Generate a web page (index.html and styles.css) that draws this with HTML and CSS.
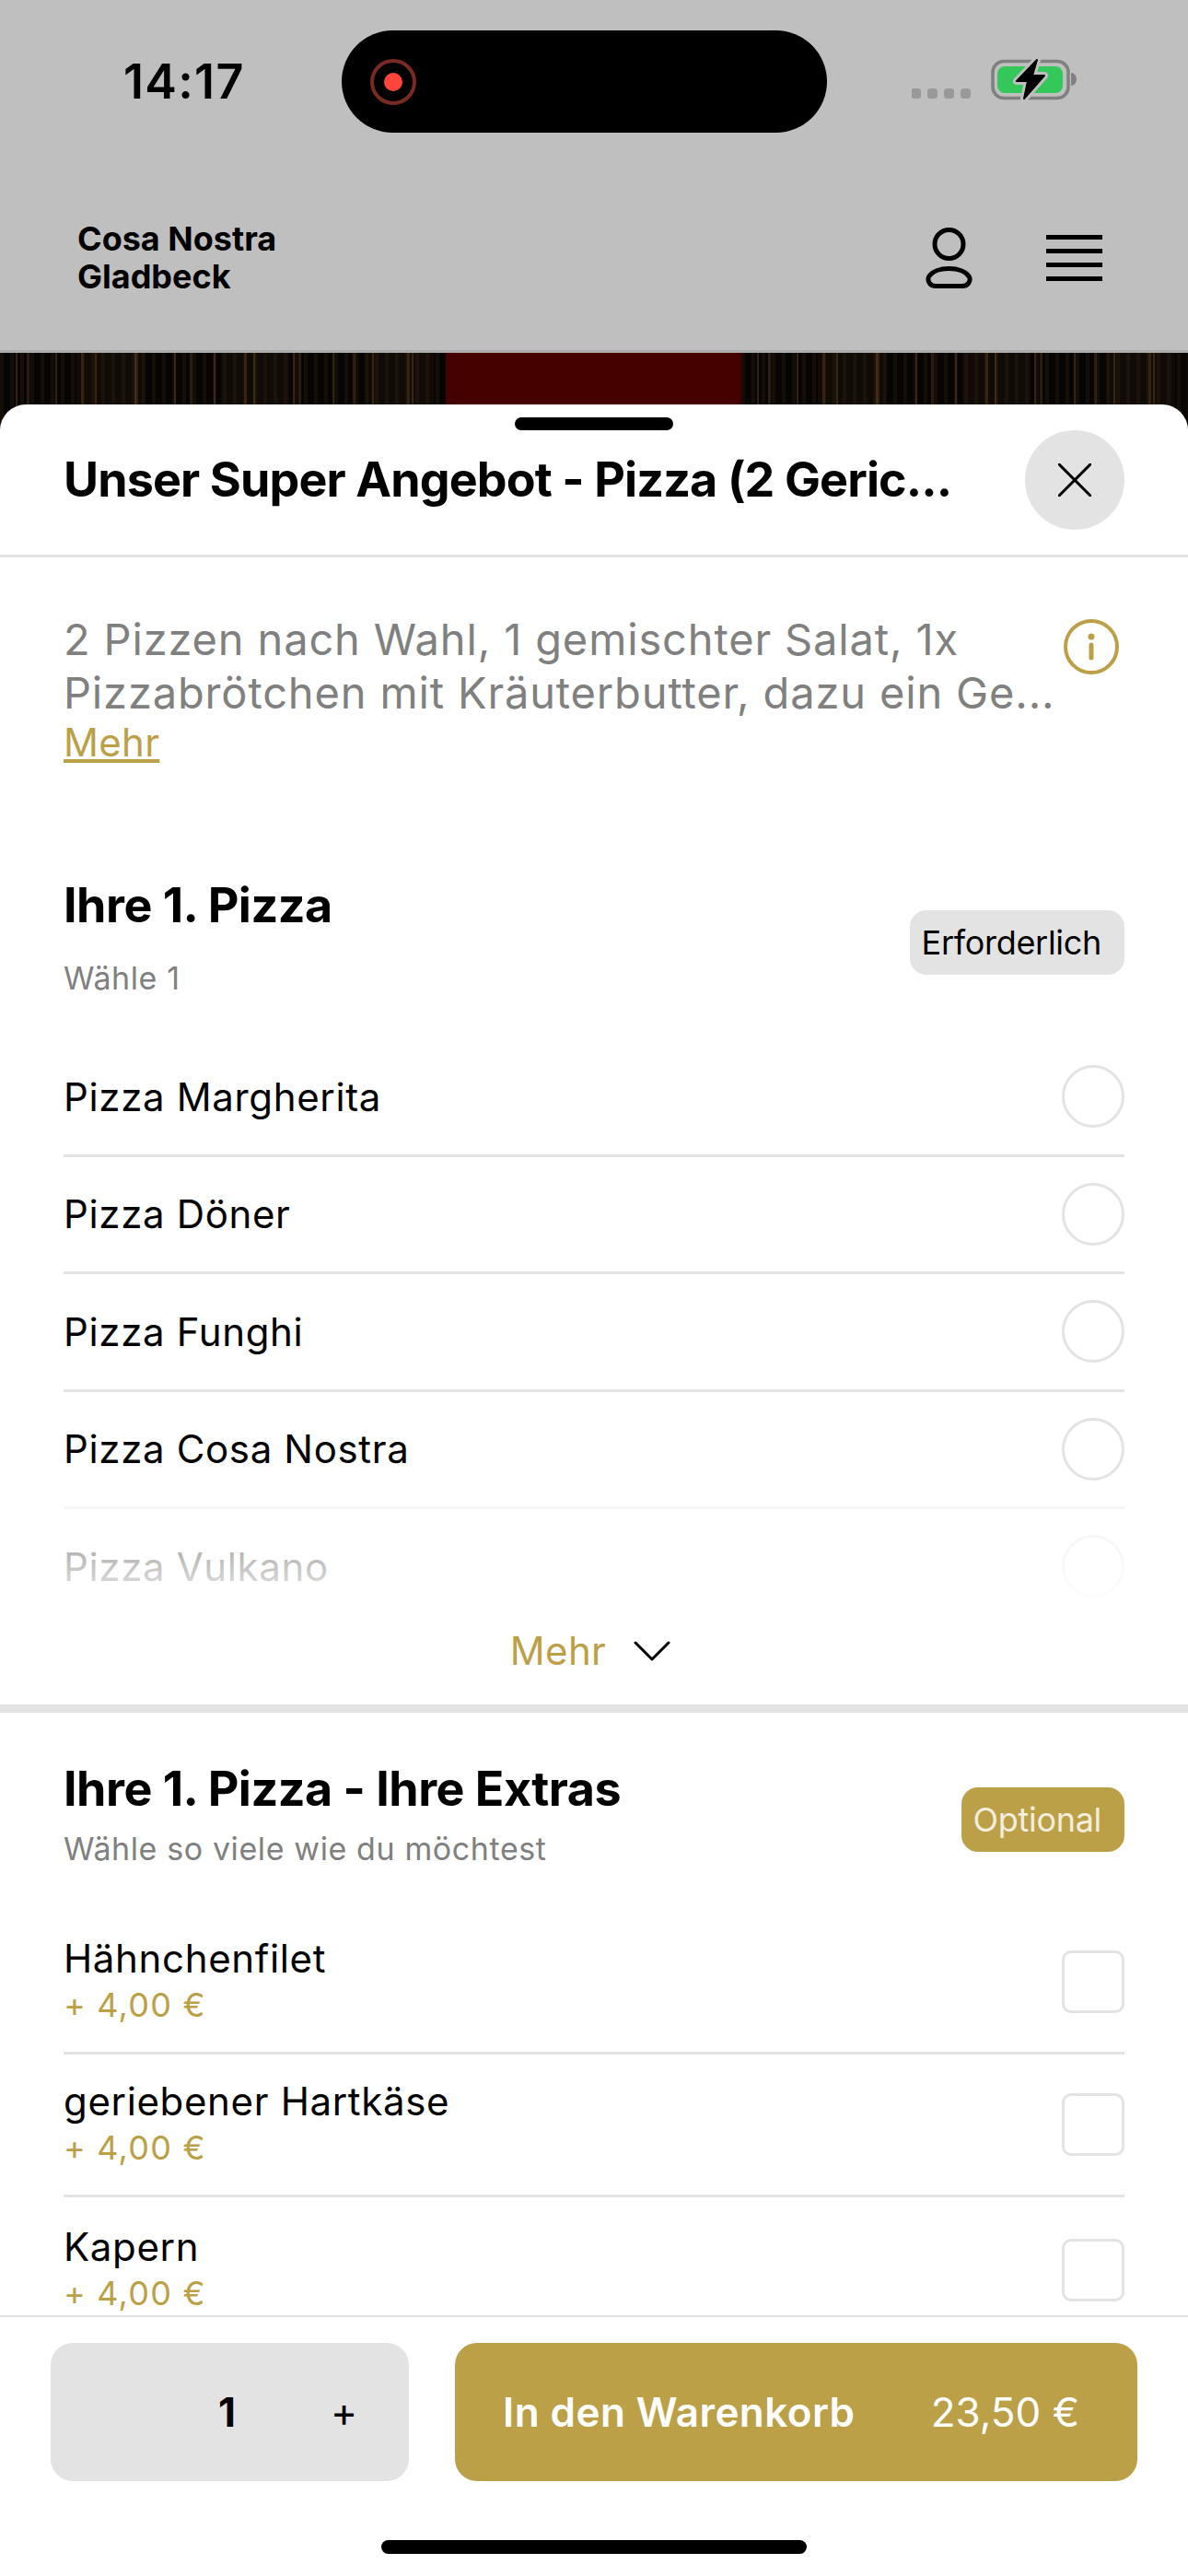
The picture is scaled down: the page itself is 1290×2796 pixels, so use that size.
FILE: index.html
```html
<!DOCTYPE html>
<html lang="de">
<head>
    <meta charset="UTF-8">
    <title>Cosa Nostra Gladbeck</title>
    <link rel="stylesheet" href="styles.css">
</head>
<body>
    <div class="page">
        <!-- iOS status bar -->
        <div class="status-bar">
            <div class="time">14:17</div>
            <div class="island">
                <div class="rec"><div class="rec-dot"></div></div>
            </div>
            <svg class="status-icons" viewBox="990 60 180 60" width="180" height="60">
                <rect x="989" y="96" width="11" height="11" rx="3.5" fill="#999"/>
                <rect x="1007" y="96" width="11" height="11" rx="3.5" fill="#999"/>
                <rect x="1025" y="96" width="11" height="11" rx="3.5" fill="#999"/>
                <rect x="1043" y="96" width="11" height="11" rx="3.5" fill="#999"/>
                <rect x="1078" y="66.5" width="82" height="40" rx="12" fill="none" stroke="#808080" stroke-width="3.5"/>
                <rect x="1083" y="72" width="71" height="29" rx="8" fill="#34c759"/>
                <path d="M1163 79 a6 7 0 0 1 0 14z" fill="#808080"/>
                <path d="M1126 65 L1104 88 L1116 88 L1112 107 L1134 82 L1121 82z" fill="#bfbfbf" stroke="#bfbfbf" stroke-width="8" stroke-linejoin="round"/>
                <path d="M1126 65 L1104 88 L1116 88 L1112 107 L1134 82 L1121 82z" fill="#000" stroke="#000" stroke-width="2" stroke-linejoin="round"/>
            </svg>
        </div>

        <!-- site header -->
        <div class="site-header">
            <div class="site-name">Cosa Nostra<br>Gladbeck</div>
            <svg class="user-icon" viewBox="1000 240 60 80" width="60" height="80">
                <circle cx="1030.5" cy="265" r="15.5" fill="none" stroke="#000" stroke-width="5"/>
                <path d="M1016 310.5 H1045 C1051 310.5 1054.5 305 1052.5 300.5 C1049 294.5 1040 291.5 1030.5 291.5 C1021 291.5 1012 294.5 1008.5 300.5 C1006.5 305 1010 310.5 1016 310.5z" fill="none" stroke="#000" stroke-width="5" stroke-linejoin="round"/>
            </svg>
            <div class="burger">
                <div class="burger-line"></div>
                <div class="burger-line"></div>
                <div class="burger-line"></div>
                <div class="burger-line"></div>
            </div>
        </div>

        <!-- page behind the sheet -->
        <div class="backdrop">
            <div class="wood wood-left"></div>
            <div class="backdrop-red"></div>
            <div class="wood wood-right"></div>
        </div>

        <div class="sheet">
            <div class="grabber"></div>
            <div class="sheet-head">
                <div class="sheet-title">Unser Super Angebot - Pizza (2 Geric...</div>
                <div class="close-btn">
                    <svg viewBox="0 0 36 36" width="36" height="36">
                        <path d="M1 1 L35 35 M35 1 L1 35" stroke="#000" stroke-width="3" stroke-linecap="round"/>
                    </svg>
                </div>
            </div>

            <div class="sheet-body">
                <div class="desc">
                    <div class="desc-text">
                        <div class="desc-line">2 Pizzen nach Wahl, 1 gemischter Salat, 1x</div>
                        <div class="desc-line">Pizzabrötchen mit Kräuterbutter, dazu ein Ge...</div>
                        <div class="desc-more">Mehr</div>
                    </div>
                    <svg class="info-icon" viewBox="0 0 60 60" width="60" height="60">
                        <circle cx="30" cy="30" r="28" fill="none" stroke="#bca048" stroke-width="4"/>
                        <circle cx="30" cy="19" r="3.5" fill="#bca048"/>
                        <path d="M30 28 V42" stroke="#bca048" stroke-width="5" stroke-linecap="round"/>
                    </svg>
                </div>

                <!-- first group -->
                <div class="group group-first">
                    <div class="group-head">
                        <div>
                            <div class="group-title">Ihre 1. Pizza</div>
                            <div class="group-sub group-sub-wide">Wähle 1</div>
                        </div>
                        <div class="pill">Erforderlich</div>
                    </div>
                    <div class="option-list">
                        <div class="option"><span>Pizza Margherita</span><div class="radio"></div></div>
                        <div class="option"><span>Pizza Döner</span><div class="radio"></div></div>
                        <div class="option"><span>Pizza Funghi</span><div class="radio"></div></div>
                        <div class="option"><span>Pizza Cosa Nostra</span><div class="radio"></div></div>
                        <div class="option"><span>Pizza Vulkano</span><div class="radio"></div></div>
                        <div class="option-fade"></div>
                    </div>
                    <div class="show-more">
                        <span>Mehr</span>
                        <svg viewBox="0 0 40 24" width="40" height="24">
                            <path d="M2 3 L20 21 L38 3" fill="none" stroke="#000" stroke-width="3" stroke-linecap="round" stroke-linejoin="round"/>
                        </svg>
                    </div>
                </div>

                <!-- second group -->
                <div class="group group-second">
                    <div class="group-head">
                        <div>
                            <div class="group-title">Ihre 1. Pizza - Ihre Extras</div>
                            <div class="group-sub">Wähle so viele wie du möchtest</div>
                        </div>
                        <div class="pill pill-gold">Optional</div>
                    </div>
                    <div class="extra-list">
                        <div class="extra">
                            <div>
                                <div class="extra-name">Hähnchenfilet</div>
                                <div class="extra-price">+ 4,00 €</div>
                            </div>
                            <div class="checkbox"></div>
                        </div>
                        <div class="extra">
                            <div>
                                <div class="extra-name">geriebener Hartkäse</div>
                                <div class="extra-price">+ 4,00 €</div>
                            </div>
                            <div class="checkbox"></div>
                        </div>
                        <div class="extra">
                            <div>
                                <div class="extra-name">Kapern</div>
                                <div class="extra-price">+ 4,00 €</div>
                            </div>
                            <div class="checkbox"></div>
                        </div>
                    </div>
                </div>
            </div>

            <div class="footer">
                <div class="footer-btns">
                    <div class="qty">
                        <span class="qty-num">1</span>
                        <span class="qty-plus">+</span>
                    </div>
                    <div class="cart-btn">
                        <span class="cart-label">In den Warenkorb</span>
                        <span class="cart-price">23,50 €</span>
                    </div>
                </div>
                <div class="home-bar"></div>
            </div>
        </div>
    </div>
</body>
</html>
```

FILE: styles.css
```css
* {
    box-sizing: border-box;
}
body {
    margin: 0;
    font-family: "Inter", "Liberation Sans", sans-serif;
    color: #000;
    background-color: #fff;
}
.page {
    width: 1290px;
    height: 2796px;
    display: flex;
    flex-direction: column;
    overflow: hidden;
}

/* status bar */
.status-bar {
    height: 180px;
    padding-top: 33px;
    display: flex;
    align-items: flex-start;
    background-color: #bfbfbf;
}
.time {
    width: 371px;
    height: 111px;
    padding-left: 134px;
    font-size: 52px;
    font-weight: 600;
    line-height: 111px;
    letter-spacing: 1.3px;
}
.island {
    width: 527px;
    height: 111px;
    padding-left: 31px;
    display: flex;
    align-items: center;
    background-color: #000;
    border-radius: 56px;
}
.rec {
    width: 50px;
    height: 50px;
    display: flex;
    align-items: center;
    justify-content: center;
    border: 4px solid #7a2a24;
    border-radius: 50%;
}
.rec-dot {
    width: 20px;
    height: 20px;
    background-color: #ff453a;
    border-radius: 50%;
}
.status-icons {
    margin-top: 27px;
    margin-left: 92px;
}

/* site header */
.site-header {
    height: 203px;
    padding-left: 84px;
    padding-right: 93px;
    display: flex;
    align-items: center;
    background-color: #bfbfbf;
    border-bottom: 3px solid #adadad;
}
.site-name {
    flex: 1;
    font-size: 36px;
    font-weight: 700;
    line-height: 41px;
}
.burger {
    width: 61px;
    margin-left: 76px;
    display: flex;
    flex-direction: column;
    gap: 10px;
}
.burger-line {
    height: 5px;
    background-color: #000;
}

/* backdrop runs on under the rounded top of the sheet */
.backdrop {
    height: 84px;
    flex-shrink: 0;
    display: flex;
}
.wood {
    background-color: #100b06;
    background-image:
        repeating-linear-gradient(90deg, transparent 0 17px, rgba(112, 76, 40, .42) 17px 19px, transparent 19px 43px),
        repeating-linear-gradient(90deg, transparent 0 29px, rgba(84, 56, 30, .46) 29px 32px, transparent 32px 59px),
        repeating-linear-gradient(90deg, rgba(56, 38, 20, .28) 0 4px, transparent 4px 11px),
        repeating-linear-gradient(90deg, rgba(0, 0, 0, .55) 0 83px, transparent 83px 157px);
}
.wood-left {
    width: 484px;
}
.wood-right {
    flex: 1;
}
.backdrop-red {
    width: 321px;
    background-color: #450000;
}

/* sheet */
.sheet {
    position: relative;
    flex: 1;
    min-height: 0;
    margin-top: -28px;
    display: flex;
    flex-direction: column;
    background-color: #fff;
    border-radius: 28px 28px 0 0;
}
.grabber {
    width: 172px;
    height: 14px;
    margin: 14px auto 0;
    background-color: #000;
    border-radius: 7px;
}
.sheet-head {
    height: 138px;
    flex-shrink: 0;
    padding-left: 69px;
    padding-right: 69px;
    display: flex;
    justify-content: space-between;
    align-items: flex-start;
    border-bottom: 3px solid #e3e3e3;
}
.sheet-title {
    font-size: 52px;
    font-weight: 700;
    line-height: 108px;
    letter-spacing: -.87px;
    white-space: nowrap;
}
.close-btn {
    width: 108px;
    height: 108px;
    display: flex;
    align-items: center;
    justify-content: center;
    background-color: #e3e3e3;
    border-radius: 50%;
}
.sheet-body {
    flex: 1;
    min-height: 0;
    overflow: hidden;
}

/* description */
.desc {
    padding: 60px 75px 0 69px;
    display: flex;
    justify-content: space-between;
    align-items: flex-start;
}
.desc-line {
    font-size: 47px;
    line-height: 58px;
    letter-spacing: .85px;
    color: #808080;
    white-space: nowrap;
}
.desc-more {
    width: fit-content;
    font-size: 42px;
    line-height: 50px;
    letter-spacing: .3px;
    color: #bca048;
    text-decoration: underline;
    margin-bottom: 2px;
}
.info-icon {
    margin-top: 7px;
}

/* option groups */
.group {
    padding: 0 69px;
}
.group-first {
    padding-top: 119px;
    border-bottom: 9px solid #e3e3e3;
}
.group-second {
    padding-top: 52px;
}
.group-head {
    display: flex;
    justify-content: space-between;
    align-items: center;
}
.group-title {
    font-size: 52px;
    font-weight: 700;
    line-height: 62px;
    letter-spacing: -.5px;
}
.group-sub {
    margin-top: 14px;
    font-size: 34px;
    line-height: 40px;
    letter-spacing: .6px;
    color: #808080;
}
.group-sub-wide {
    margin-top: 28px;
}
.pill {
    height: 70px;
    margin-top: 12px;
    padding: 0 25px 0 13px;
    font-size: 36px;
    line-height: 70px;
    letter-spacing: -.3px;
    background-color: #e3e3e3;
    border-radius: 18px;
}
.pill-gold {
    color: #f3eedd;
    background-color: #bca048;
}
.option-list {
    position: relative;
    height: 612px;
    margin-top: 46px;
    overflow: hidden;
}
.option {
    height: 127.5px;
    display: flex;
    justify-content: space-between;
    align-items: center;
    font-size: 42px;
    letter-spacing: .65px;
    border-bottom: 3px solid #e3e3e3;
}
.radio {
    width: 68px;
    height: 68px;
    border: 3px solid #e3e3e3;
    border-radius: 50%;
}
.option-fade {
    position: absolute;
    left: 0;
    right: 0;
    bottom: 0;
    height: 130px;
    background: linear-gradient(rgba(255, 255, 255, .68), rgba(255, 255, 255, .72) 60%, rgba(255, 255, 255, .88) 90%, #fff);
}
.show-more {
    height: 110px;
    padding-right: 8px;
    padding-bottom: 7px;
    display: flex;
    align-items: center;
    justify-content: center;
    gap: 30px;
    font-size: 42px;
    letter-spacing: .3px;
    color: #bca048;
}
.extra-list {
    margin-top: 48px;
}
.extra {
    height: 155px;
    display: flex;
    justify-content: space-between;
    align-items: center;
    border-bottom: 3px solid #e3e3e3;
}
.extra:last-child {
    padding-top: 3px;
    border-bottom: 0;
}
.extra-name {
    font-size: 42px;
    line-height: 50px;
    letter-spacing: .65px;
}
.extra-price {
    font-size: 36px;
    line-height: 50px;
    letter-spacing: 1.2px;
    color: #bca048;
}
.checkbox {
    width: 68px;
    height: 68px;
    border: 3px solid #e3e3e3;
    border-radius: 10px;
}

/* footer */
.footer {
    height: 283px;
    flex-shrink: 0;
    padding-top: 28px;
    border-top: 2px solid #e3e3e3;
    background-color: #fff;
}
.footer-btns {
    padding: 0 55px;
    display: flex;
    gap: 50px;
}
.qty {
    width: 389px;
    height: 150px;
    display: flex;
    align-items: center;
    background-color: #e3e3e3;
    border-radius: 24px;
}
.qty-num {
    width: 201px;
    text-align: right;
    font-size: 44px;
    font-weight: 700;
}
.qty-plus {
    margin-left: 103px;
    font-size: 44px;
}
.cart-btn {
    flex: 1;
    height: 150px;
    padding: 0 63px 0 52px;
    display: flex;
    align-items: center;
    justify-content: space-between;
    color: #fff;
    font-size: 44px;
    background-color: #bca048;
    border-radius: 24px;
}
.cart-label {
    font-weight: 600;
    letter-spacing: .45px;
}
.home-bar {
    width: 462px;
    height: 15px;
    margin: 64px auto 0;
    background-color: #000;
    border-radius: 8px;
}
```
